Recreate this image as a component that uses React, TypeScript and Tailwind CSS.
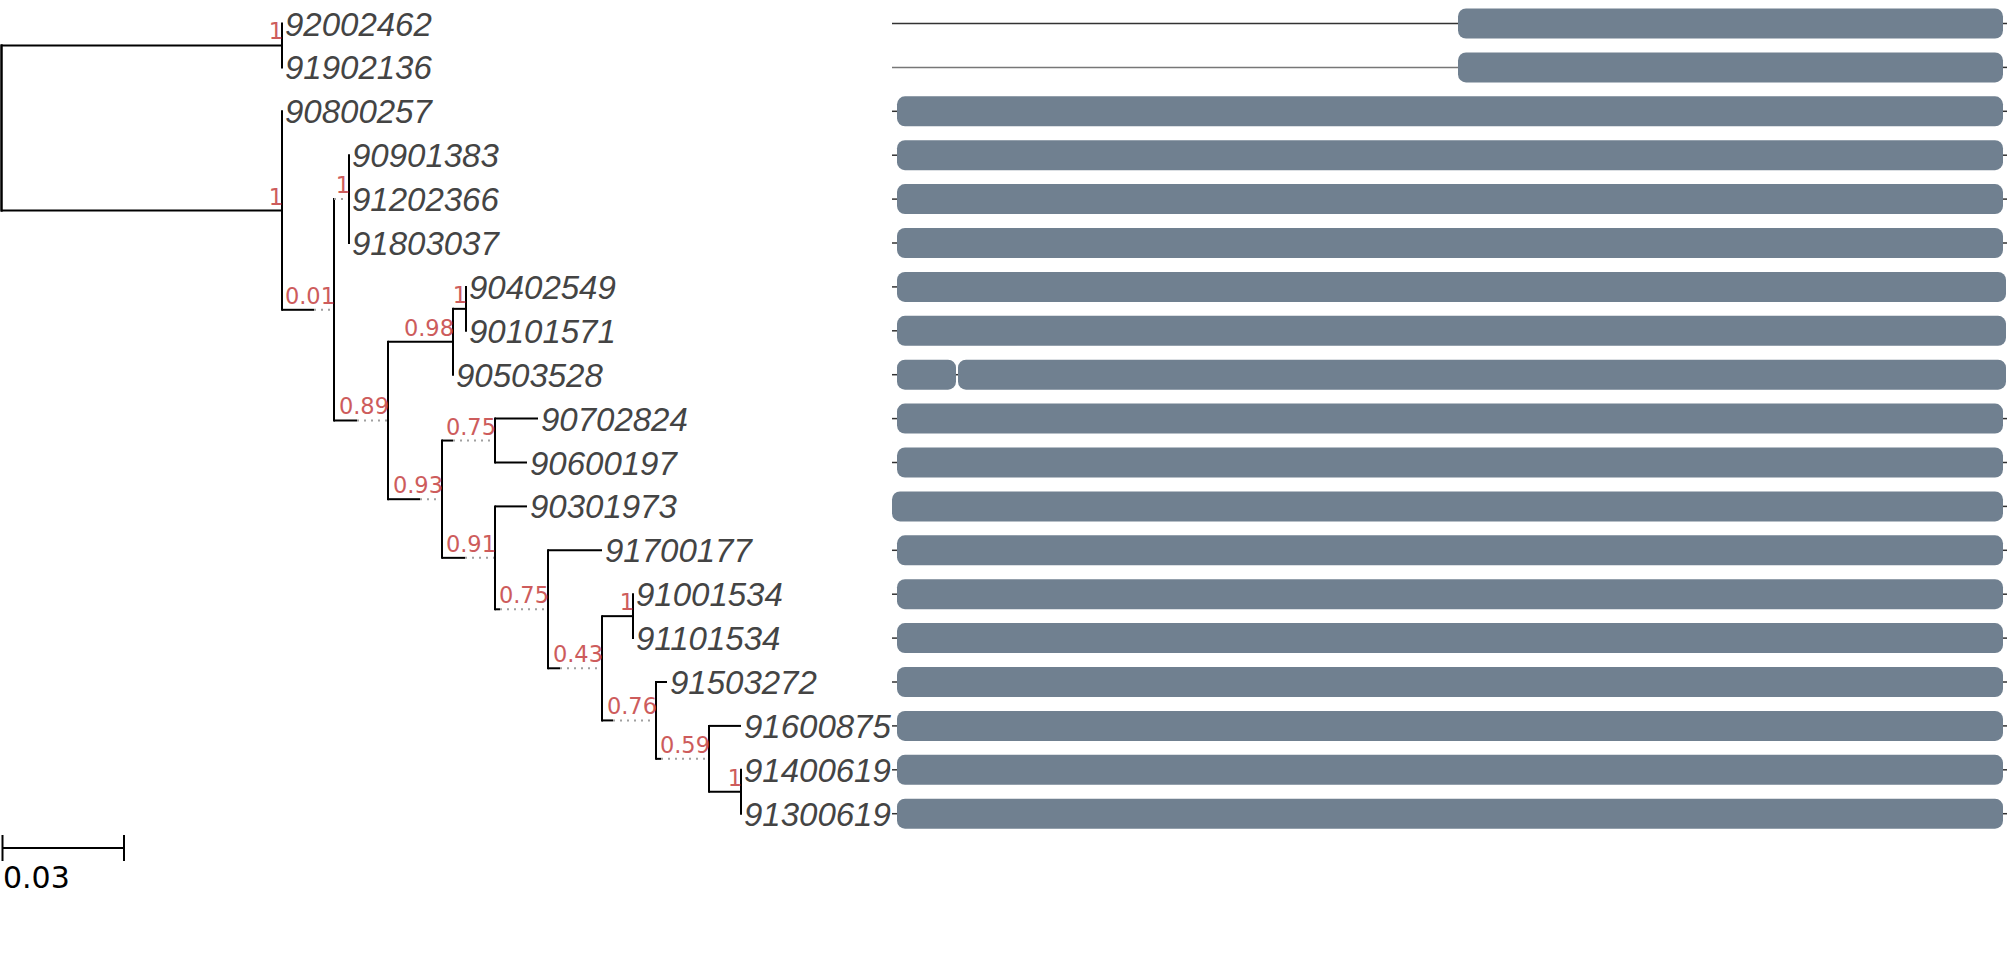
type N = {
  x: number;
  s?: number;
  sup?: string;
  leaf?: number;
  kids?: N[];
};

const names = [
  "92002462",
  "91902136",
  "90800257",
  "90901383",
  "91202366",
  "91803037",
  "90402549",
  "90101571",
  "90503528",
  "90702824",
  "90600197",
  "90301973",
  "91700177",
  "91001534",
  "91101534",
  "91503272",
  "91600875",
  "91400619",
  "91300619",
];

const rowY = (i: number) => 23.5 + 43.9 * i;

const tree: N = {
  x: 1.5,
  kids: [
    { x: 282, sup: "1", kids: [{ leaf: 0, x: 282 }, { leaf: 1, x: 282 }] },
    {
      x: 282,
      sup: "1",
      kids: [
        { leaf: 2, x: 282 },
        {
          x: 334,
          s: 314,
          sup: "0.01",
          kids: [
            {
              x: 349,
              s: 334,
              sup: "1",
              kids: [
                { leaf: 3, x: 349 },
                { leaf: 4, x: 349 },
                { leaf: 5, x: 349 },
              ],
            },
            {
              x: 388,
              s: 357,
              sup: "0.89",
              kids: [
                {
                  x: 453,
                  sup: "0.98",
                  kids: [
                    { x: 466, sup: "1", kids: [{ leaf: 6, x: 466 }, { leaf: 7, x: 466 }] },
                    { leaf: 8, x: 453 },
                  ],
                },
                {
                  x: 442,
                  s: 420,
                  sup: "0.93",
                  kids: [
                    { x: 495, s: 453, sup: "0.75", kids: [{ leaf: 9, x: 538 }, { leaf: 10, x: 527 }] },
                    {
                      x: 495,
                      s: 465,
                      sup: "0.91",
                      kids: [
                        { leaf: 11, x: 527 },
                        {
                          x: 548,
                          s: 500,
                          sup: "0.75",
                          kids: [
                            { leaf: 12, x: 602 },
                            {
                              x: 602,
                              s: 560,
                              sup: "0.43",
                              kids: [
                                { x: 633, sup: "1", kids: [{ leaf: 13, x: 633 }, { leaf: 14, x: 633 }] },
                                {
                                  x: 656,
                                  s: 613,
                                  sup: "0.76",
                                  kids: [
                                    { leaf: 15, x: 667 },
                                    {
                                      x: 709,
                                      s: 661,
                                      sup: "0.59",
                                      kids: [
                                        { leaf: 16, x: 741 },
                                        { x: 741, sup: "1", kids: [{ leaf: 17, x: 741 }, { leaf: 18, x: 741 }] },
                                      ],
                                    },
                                  ],
                                },
                              ],
                            },
                          ],
                        },
                      ],
                    },
                  ],
                },
              ],
            },
          ],
        },
      ],
    },
  ],
};

const nodeY = (n: N): number => {
  if (n.leaf !== undefined) return rowY(n.leaf);
  const k = n.kids!;
  return (nodeY(k[0]) + nodeY(k[k.length - 1])) / 2;
};

// walks the tree and collects svg pieces
const drawTree = (n: N, px: number | null, out: JSX.Element[], key: string) => {
  const y = nodeY(n);
  if (px !== null) {
    const solidEnd = n.s ?? n.x;
    out.push(<line key={key + "h"} x1={px} y1={y} x2={solidEnd} y2={y} stroke="#000" strokeWidth={2} />);
    if (n.s !== undefined)
      out.push(
        <line key={key + "d"} x1={n.s} y1={y} x2={n.x} y2={y} stroke="#a0a0a0" strokeWidth={2} strokeDasharray="2 5" />
      );
  }
  if (n.leaf !== undefined) {
    out.push(
      <text
        key={key + "t"}
        x={n.x + 3}
        y={y + 12}
        className="font-['Liberation_Sans',Arial,sans-serif] italic text-[33px] fill-[#444444]"
      >
        {names[n.leaf]}
      </text>
    );
    return;
  }
  const k = n.kids!;
  out.push(
    <line key={key + "v"} x1={n.x} y1={nodeY(k[0]) - 1} x2={n.x} y2={nodeY(k[k.length - 1]) + 1} stroke="#000" strokeWidth={2} />
  );
  if (n.sup)
    out.push(
      <text
        key={key + "s"}
        x={n.x + 1}
        y={y - 6}
        textAnchor="end"
        className="font-['DejaVu_Sans',sans-serif] text-[22.5px] fill-[#cd5c5c]"
      >
        {n.sup}
      </text>
    );
  k.forEach((c, i) => drawTree(c, n.x, out, key + "-" + i));
};

type Seg = [number, number];
const barsFor = (i: number): { segs: Seg[]; lead?: [number, number, string]; ltick: boolean; rtick: boolean } => {
  if (i === 0) return { segs: [[1458, 2003]], lead: [892, 1458, "#333333"], ltick: false, rtick: true };
  if (i === 1) return { segs: [[1458, 2003]], lead: [892, 1458, "#777777"], ltick: false, rtick: true };
  if (i === 6 || i === 7) return { segs: [[897, 2006]], ltick: true, rtick: false };
  if (i === 8)
    return {
      segs: [
        [897, 956],
        [958, 2006],
      ],
      ltick: true,
      rtick: false,
    };
  if (i === 11) return { segs: [[892, 2003]], ltick: false, rtick: true };
  return { segs: [[897, 2003]], ltick: true, rtick: true };
};

const App = () => {
  const pieces: JSX.Element[] = [];
  drawTree(tree, null, pieces, "r");
  return (
    <div className="w-[2007px] h-[957px] bg-white overflow-hidden">
      <svg width={2007} height={957} viewBox="0 0 2007 957" className="block">
        {names.map((_, i) => {
          const y = rowY(i);
          const b = barsFor(i);
          return (
            <g key={"b" + i}>
              {b.lead && <line x1={b.lead[0]} y1={y} x2={b.lead[1]} y2={y} stroke={b.lead[2]} strokeWidth={1.5} />}
              {b.ltick && <line x1={892} y1={y} x2={898} y2={y} stroke="#333" strokeWidth={1.5} />}
              {b.rtick && <line x1={2002} y1={y} x2={2007} y2={y} stroke="#333" strokeWidth={1.5} />}
              {i === 8 && <line x1={955} y1={y} x2={959} y2={y} stroke="#333" strokeWidth={1.5} />}
              {b.segs.map((s, j) => (
                <rect key={j} x={s[0]} y={y - 15} width={s[1] - s[0]} height={30} rx={8} fill="#708090" />
              ))}
            </g>
          );
        })}
        {pieces}
        <line x1={1.5} y1={nodeY(tree.kids![0]) - 1} x2={1.5} y2={nodeY(tree.kids![1]) + 1} stroke="#000" strokeWidth={2} />
        <line x1={2.5} y1={848} x2={124} y2={848} stroke="#000" strokeWidth={2} />
        <line x1={2.5} y1={835} x2={2.5} y2={861} stroke="#000" strokeWidth={2} />
        <line x1={124} y1={835} x2={124} y2={861} stroke="#000" strokeWidth={2} />
        <text x={3} y={888} className="font-['DejaVu_Sans',sans-serif] text-[30px] fill-black">
          0.03
        </text>
      </svg>
    </div>
  );
};

export default App;
